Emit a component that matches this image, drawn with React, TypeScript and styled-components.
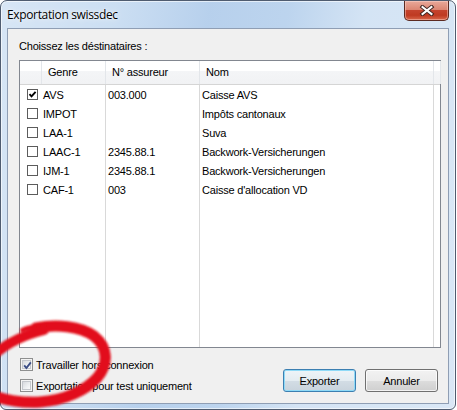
import React from 'react';
import styled, { createGlobalStyle } from 'styled-components';

const GlobalStyle = createGlobalStyle`
  html, body { margin: 0; padding: 0; background: #ffffff; }
  body { font-family: "Liberation Sans", Arial, sans-serif; }
  * { box-sizing: border-box; }
`;

const Page = styled.div`
  position: relative;
  width: 457px;
  height: 410px;
  overflow: hidden;
  background: #ffffff;
`;

const Window = styled.div`
  width: 456px;
  height: 410px;
  display: flex;
  flex-direction: column;
  padding: 0 6px 5px 6px;
  border: 1px solid #4f5c70;
  border-radius: 7px 7px 6px 6px;
  background:
    linear-gradient(100deg,
      rgba(255,255,255,0.30) 0%,
      rgba(255,255,255,0.10) 22%,
      rgba(130,170,220,0.22) 40%,
      rgba(130,170,220,0.14) 55%,
      rgba(255,255,255,0.25) 70%,
      rgba(255,255,255,0.35) 100%),
    #c6dbf1;
  box-shadow: inset 0 0 0 1px rgba(255,255,255,0.6);
`;

const TitleBar = styled.div`
  height: 27px;
  flex-shrink: 0;
  display: flex;
  justify-content: space-between;
  align-items: flex-start;
`;

const Title = styled.span`
  margin-top: 6px;
  font-family: "Open Sans", "Noto Sans", sans-serif;
  font-size: 12px;
  line-height: 16px;
  letter-spacing: -0.35px;
  color: #000;
  text-shadow: 0 0 6px rgba(255,255,255,0.9), 0 0 2px rgba(255,255,255,0.9);
`;

const CloseButton = styled.div`
  width: 45px;
  height: 20px;
  display: flex;
  align-items: center;
  justify-content: center;
  border: 1px solid #5b2a22;
  border-top: none;
  border-radius: 0 0 5px 5px;
  background: linear-gradient(#e9a99a 0%, #dc8673 45%, #c4432d 50%, #bf3a22 75%, #d8674a 100%);
  box-shadow: inset 0 0 0 1px rgba(255,220,210,0.45);
`;

const Client = styled.div`
  height: 376px;
  flex-shrink: 0;
  display: flex;
  flex-direction: column;
  padding: 11px 7px 0 11px;
  border: 1px solid #8f9eb4;
  background: #f0f0f0;
`;

const Label = styled.div`
  font-size: 11px;
  line-height: 13px;
  letter-spacing: -0.2px;
  color: #000;
`;

const ListView = styled.div`
  margin-top: 7px;
  height: 288px;
  flex-shrink: 0;
  display: flex;
  flex-direction: column;
  border: 1px solid #828790;
  background: #ffffff;
`;

const Header = styled.div`
  height: 24px;
  flex-shrink: 0;
  display: flex;
  border-bottom: 1px solid #d5d5d5;
  background: linear-gradient(#ffffff 0%, #ffffff 42%, #f4f5f7 43%, #f1f2f4 100%);
`;

const HeaderCell = styled.div<{ $w?: number }>`
  ${(p) => (p.$w ? `width: ${p.$w}px; flex-shrink: 0;` : 'flex: 1;')}
  display: flex;
  align-items: center;
  padding: 0 0 2px 6px;
  border-right: 1px solid #e3e6ea;
  font-size: 11px;
  letter-spacing: -0.2px;
  color: #000;
  white-space: nowrap;
`;

const Row = styled.div<{ $fill?: boolean }>`
  display: flex;
  ${(p) => (p.$fill ? 'flex: 1;' : 'height: 19px; flex-shrink: 0;')}
`;

const Cell = styled.div<{ $w?: number; $pad?: number }>`
  ${(p) => (p.$w ? `width: ${p.$w}px; flex-shrink: 0; border-right: 1px solid #d9d9d9;` : 'flex: 1;')}
  display: flex;
  align-items: center;
  gap: 5px;
  padding-left: ${(p) => p.$pad ?? 2}px;
  font-size: 11px;
  letter-spacing: -0.2px;
  color: #000;
  white-space: nowrap;
  overflow: hidden;
`;

const ListCheck = styled.span`
  width: 11px;
  height: 11px;
  flex-shrink: 0;
  display: flex;
  align-items: center;
  justify-content: center;
  border: 1px solid #5c5c5c;
  background: #ffffff;
`;

const Footer = styled.div`
  flex: 1;
  display: flex;
  justify-content: space-between;
  align-items: flex-end;
`;

const Options = styled.div`
  display: flex;
  flex-direction: column;
  margin-left: 1px;
  padding-bottom: 7px;
`;

const Option = styled.label`
  height: 21px;
  display: flex;
  align-items: center;
  gap: 3px;
  font-size: 11px;
  letter-spacing: -0.2px;
  color: #000;
  white-space: nowrap;
`;

const ThemedCheck = styled.span`
  width: 13px;
  height: 13px;
  flex-shrink: 0;
  position: relative;
  border: 1px solid #8e8f8f;
  background: #f4f4f4;
  padding: 1px;
  display: flex;
`;

const ThemedInner = styled.span`
  flex: 1;
  border: 1px solid #c4c7cc;
  background: linear-gradient(135deg, #d7d9dd 0%, #eceef0 55%, #fbfbfb 100%);
`;

const CheckMarkSvg = styled.svg`
  position: absolute;
  left: 0;
  top: 0;
`;

const Buttons = styled.div`
  display: flex;
  gap: 9px;
  margin: 0 3px 11px 0;
`;

const PushButton = styled.button<{ $default?: boolean }>`
  width: 73px;
  height: 23px;
  padding: 0;
  font-family: "Liberation Sans", Arial, sans-serif;
  font-size: 11px;
  letter-spacing: -0.2px;
  color: #000;
  border-radius: 3px;
  border: 1px solid ${(p) => (p.$default ? '#3c7fb1' : '#707070')};
  background: ${(p) =>
    p.$default
      ? 'linear-gradient(#eef4f8 0%, #e4ecf1 50%, #d3dde5 51%, #c8d3dc 100%)'
      : 'linear-gradient(#f2f2f2 0%, #ebebeb 50%, #dddddd 51%, #cfcfcf 100%)'};
  box-shadow: ${(p) =>
    p.$default ? 'inset 0 0 0 1px #8fdaf7' : 'inset 0 0 0 1px rgba(255,255,255,0.75)'};
`;

const Scribble = styled.svg`
  position: absolute;
  left: 0;
  top: 315px;
  pointer-events: none;
`;

type Entry = { genre: string; no: string; nom: string; checked?: boolean };

const entries: Entry[] = [
  { genre: 'AVS', no: '003.000', nom: 'Caisse AVS', checked: true },
  { genre: 'IMPOT', no: '', nom: 'Impôts cantonaux' },
  { genre: 'LAA-1', no: '', nom: 'Suva' },
  { genre: 'LAAC-1', no: '2345.88.1', nom: 'Backwork-Versicherungen' },
  { genre: 'IJM-1', no: '2345.88.1', nom: 'Backwork-Versicherungen' },
  { genre: 'CAF-1', no: '003', nom: "Caisse d'allocation VD" },
];

const SmallTick = () => (
  <svg width="9" height="9" viewBox="0 0 9 9">
    <polyline points="1.5,4.2 3.5,6.3 7.6,1.8" fill="none" stroke="#000" strokeWidth="1.9" />
  </svg>
);

const Themed = ({ checked }: { checked?: boolean }) => (
  <ThemedCheck>
    <ThemedInner />
    {checked && (
      <CheckMarkSvg width="13" height="13" viewBox="0 0 13 13">
        <polyline points="3.2,6.4 5.4,9 9.8,3.4" fill="none" stroke="#3b4d86" strokeWidth="1.9" />
      </CheckMarkSvg>
    )}
  </ThemedCheck>
);

export default function App() {
  return (
    <Page>
      <GlobalStyle />
      <Window>
        <TitleBar>
          <Title>Exportation swissdec</Title>
          <CloseButton>
            <svg width="16" height="11" viewBox="0 0 16 11">
              <g strokeLinecap="square">
                <line x1="3.5" y1="2" x2="12.5" y2="9" stroke="#3d2420" strokeWidth="4" />
                <line x1="12.5" y1="2" x2="3.5" y2="9" stroke="#3d2420" strokeWidth="4" />
                <line x1="3.5" y1="2" x2="12.5" y2="9" stroke="#ffffff" strokeWidth="2" />
                <line x1="12.5" y1="2" x2="3.5" y2="9" stroke="#ffffff" strokeWidth="2" />
              </g>
            </svg>
          </CloseButton>
        </TitleBar>
        <Client>
          <Label>Choissez les déstinataires :</Label>
          <ListView>
            <Header>
              <HeaderCell $w={22} />
              <HeaderCell $w={64}>Genre</HeaderCell>
              <HeaderCell $w={94}>N° assureur</HeaderCell>
              <HeaderCell $w={234}>Nom</HeaderCell>
              <HeaderCell />
            </Header>
            {entries.map((e) => (
              <Row key={e.genre}>
                <Cell $w={86} $pad={7}>
                  <ListCheck>{e.checked && <SmallTick />}</ListCheck>
                  {e.genre}
                </Cell>
                <Cell $w={94}>{e.no}</Cell>
                <Cell $w={234}>{e.nom}</Cell>
                <Cell />
              </Row>
            ))}
            <Row $fill>
              <Cell $w={86} />
              <Cell $w={94} />
              <Cell $w={234} />
              <Cell />
            </Row>
          </ListView>
          <Footer>
            <Options>
              <Option>
                <Themed checked />
                Travailler hors connexion
              </Option>
              <Option>
                <Themed />
                Exportation pour test uniquement
              </Option>
            </Options>
            <Buttons>
              <PushButton $default>Exporter</PushButton>
              <PushButton>Annuler</PushButton>
            </Buttons>
          </Footer>
        </Client>
      </Window>
      <Scribble width="130" height="95" viewBox="0 315 130 95">
        <defs>
          <filter id="soft" x="-20%" y="-20%" width="140%" height="140%">
            <feGaussianBlur stdDeviation="0.8" />
          </filter>
        </defs>
        <g filter="url(#soft)" fill="none" stroke="#e2111a" strokeLinecap="round">
          <path d="M 22 330 C 28 327, 34 326, 42 326" strokeWidth="4" />
          <path
            d="M 36 328 C 56 324, 80 326, 94 336 C 108 347, 109 364, 97 378 C 86 390, 66 400, 40 402 C 22 403, 6 400, -6 396"
            strokeWidth="11"
          />
          <path d="M -5 354 C 5 345, 20 336, 44 330" strokeWidth="10" />
        </g>
      </Scribble>
    </Page>
  );
}
